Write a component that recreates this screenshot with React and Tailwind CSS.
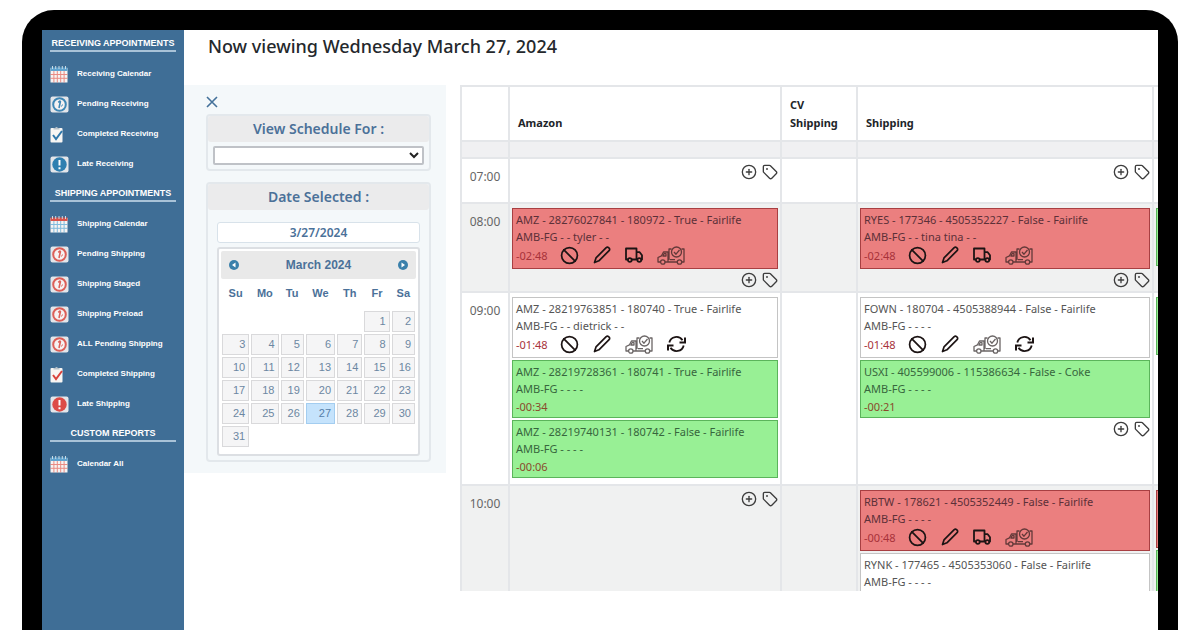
import { useState } from "react"
import { Ban, CirclePlus, Tag } from "lucide-react"
import clsx from "clsx"

const menu = [
    {
        title: "RECEIVING APPOINTMENTS",
        items: [
            { label: "Receiving Calendar", icon: "calendar", main: "#e5695f", top: "#5fa3cf" },
            { label: "Pending Receiving", icon: "clock", main: "#3f87b5" },
            { label: "Completed Receiving", icon: "clipboard", main: "#2f78ab" },
            { label: "Late Receiving", icon: "alert", main: "#2f7fb0" }
        ]
    },
    {
        title: "SHIPPING APPOINTMENTS",
        items: [
            { label: "Shipping Calendar", icon: "calendar", main: "#5aa9d6", top: "#d9534b" },
            { label: "Pending Shipping", icon: "clock", main: "#dc5f58" },
            { label: "Shipping Staged", icon: "clock", main: "#dc5f58" },
            { label: "Shipping Preload", icon: "clock", main: "#dc5f58" },
            { label: "ALL Pending Shipping", icon: "clock", main: "#dc5f58" },
            { label: "Completed Shipping", icon: "clipboard", main: "#d9433c" },
            { label: "Late Shipping", icon: "alert", main: "#dd4b46" }
        ]
    },
    {
        title: "CUSTOM REPORTS",
        items: [{ label: "Calendar All", icon: "calendar", main: "#e5695f", top: "#5fa3cf" }]
    }
]

const weekDays = ["Su", "Mo", "Tu", "We", "Th", "Fr", "Sa"]

// March 2024 starts on a Friday
const weeks = Array.from({ length: 6 }, (_, w) =>
    Array.from({ length: 7 }, (_, d) => {
        const day = w * 7 + d - 4
        return day >= 1 && day <= 31 ? day : null
    })
)

const columns = ["Amazon", "CV Shipping", "Shipping", ""]

const schedule = [
    {
        time: "07:00",
        cells: [{ actions: true }, {}, { actions: true }, {}]
    },
    {
        time: "08:00",
        shaded: true,
        cells: [
            {
                actions: true,
                cards: [{ color: "red", title: "AMZ - 28276027841 - 180972 - True - Fairlife", detail: "AMB-FG - - tyler - -", late: "-02:48", icons: ["truck", "check"] }]
            },
            {},
            {
                actions: true,
                cards: [{ color: "red", title: "RYES - 177346 - 4505352227 - False - Fairlife", detail: "AMB-FG - - tina tina - -", late: "-02:48", icons: ["truck", "check"] }]
            },
            { cards: [{ color: "green" }] }
        ]
    },
    {
        time: "09:00",
        cells: [
            {
                cards: [
                    { color: "white", title: "AMZ - 28219763851 - 180740 - True - Fairlife", detail: "AMB-FG - - dietrick - -", late: "-01:48", icons: ["check", "refresh"] },
                    { color: "green", title: "AMZ - 28219728361 - 180741 - True - Fairlife", detail: "AMB-FG - - - -", late: "-00:34" },
                    { color: "green", title: "AMZ - 28219740131 - 180742 - False - Fairlife", detail: "AMB-FG - - - -", late: "-00:06" }
                ]
            },
            {},
            {
                actions: true,
                cards: [
                    { color: "white", title: "FOWN - 180704 - 4505388944 - False - Fairlife", detail: "AMB-FG - - - -", late: "-01:48", icons: ["check", "refresh"] },
                    { color: "green", title: "USXI - 405599006 - 115386634 - False - Coke", detail: "AMB-FG - - - -", late: "-00:21" }
                ]
            },
            { cards: [{ color: "green" }] }
        ]
    },
    {
        time: "10:00",
        shaded: true,
        cells: [
            { actions: true },
            {},
            {
                cards: [
                    { color: "red", title: "RBTW - 178621 - 4505352449 - False - Fairlife", detail: "AMB-FG - - - -", late: "-00:48", icons: ["truck", "check"] },
                    { color: "white", title: "RYNK - 177465 - 4505353060 - False - Fairlife", detail: "AMB-FG - - - -" }
                ]
            },
            { cards: [{ color: "red" }, { color: "green" }] }
        ]
    }
]

const cardColors = {
    red: "bg-[#eb7f7f] border-[#a83f42] text-[#5c3038]",
    green: "bg-[#98f095] border-[#5bb45b] text-[#37663d]",
    white: "bg-white border-[#c4c4c4] text-[#555555]"
}

function MenuIcon({ icon, main, top }) {
    if (icon === "calendar") {
        return (
            <svg viewBox="0 0 18 17" className="w-[18px] h-[17px]">
                <rect x="0.5" y="2" width="17" height="14.5" fill="#f7f3f2" />
                <rect x="0.5" y="1.5" width="17" height="3.5" fill={top} />
                <path d="M2.5 0v3M5.7 0v3M9 0v3M12.3 0v3M15.5 0v3" stroke="#c9dbe6" strokeWidth="1" />
                <path d="M3.9 5v11.5M7.3 5v11.5M10.7 5v11.5M14.1 5v11.5M0.5 8.5h17M0.5 12.3h17" stroke={main} strokeWidth="1" opacity="0.75" />
            </svg>
        )
    }
    if (icon === "clipboard") {
        return (
            <svg viewBox="0 0 18 17" className="w-[18px] h-[17px]">
                <rect x="0.5" y="2" width="12" height="14.5" rx="1" fill="#f8f6f3" />
                <path d="M3.5 3.5V2h1.7a1.4 1.4 0 0 1 2.6 0h1.7v1.5z" fill="#b9c3cb" />
                <path d="M3 9l3 4 6-8" fill="none" stroke={main} strokeWidth="2" />
            </svg>
        )
    }
    return (
        <svg viewBox="0 0 19 17" className="w-[19px] h-[17px]">
            <rect x="0.5" y="0.5" width="18" height="16" rx="2" fill="#e4e6ea" />
            {icon === "clock" ? (
                <>
                    <circle cx="9.5" cy="8.5" r="6.3" fill="#f6f2f2" stroke={main} strokeWidth="2" />
                    <path d="M10.5 5L9 12M8.2 6.3l2.3-1.6" fill="none" stroke={main} strokeWidth="1.6" />
                    <path d="M11.5 10.5l1-2" fill="none" stroke={main} strokeWidth="1" />
                </>
            ) : (
                <>
                    <circle cx="9.5" cy="8.5" r="7.2" fill={main} />
                    <path d="M9.5 4v5.5M9.5 11.2v2" stroke="#fff" strokeWidth="2" />
                </>
            )}
        </svg>
    )
}

function PencilIcon() {
    return (
        <svg viewBox="0 0 18 18" className="w-[18px] h-[18px]" fill="none" stroke="currentColor" strokeWidth="1.7" strokeLinejoin="round">
            <path d="M1.5 16.5l1.5-4.6L13.2 1.7a1.6 1.6 0 0 1 2.4 0l.5.5a1.6 1.6 0 0 1 0 2.4L5.9 14.8z" />
        </svg>
    )
}

function TruckIcon() {
    return (
        <svg viewBox="0 0 18 18" className="w-[18px] h-[18px]" fill="none" stroke="currentColor" strokeWidth="1.8" strokeLinejoin="round">
            <path d="M2.7 13.5H1V2.5h10.5v11H7M11.5 6.2h3.2L17 9.2v4.3h-1M11.5 13.5H13" />
            <circle cx="4.8" cy="14" r="1.9" />
            <circle cx="14.3" cy="14" r="1.9" />
        </svg>
    )
}

function TruckCheckIcon() {
    return (
        <svg viewBox="0 0 28 19" className="w-[28px] h-[19px] opacity-65" fill="none" stroke="currentColor" strokeWidth="1.3" strokeLinejoin="round">
            <path d="M3.5 16H1v-4.5l3.5-1.7L6.5 6H11v10H8M11 16h9M14.5 3H12v11M25 16h2V3h-2.5" />
            <path d="M5.8 10H9V7.7H7z" />
            <circle cx="19.5" cy="6" r="5" />
            <path d="M17 6l2 2.2L22.500 4M13 13.7h5" />
            <circle cx="5.8" cy="16" r="2.200" />
            <circle cx="22.500" cy="16" r="2.200" />
        </svg>
    )
}

function RefreshIcon() {
    return (
        <svg viewBox="0 0 19 18" className="w-[19px] h-[18px]" fill="none" stroke="currentColor" strokeWidth="1.8">
            <path d="M2.3 7.5A7.3 7.3 0 0 1 15.500 5.200M16.700 10.500A7.3 7.3 0 0 1 3.5 12.800" />
            <path d="M18 2.500v5h-5.500M1 15.500v-5h5.500" strokeWidth="2" />
        </svg>
    )
}

const cardIcons = {
    truck: { label: "Assign truck", Icon: TruckIcon },
    check: { label: "Check in truck", Icon: TruckCheckIcon },
    refresh: { label: "Refresh", Icon: RefreshIcon }
}

function Sidebar() {
    return (
        <nav className="w-[142px] shrink-0 space-y-px bg-[#3f6e96] font-['Liberation_Sans',sans-serif] font-bold text-white">
            {menu.map((section) => (
                <section key={section.title}>
                    <div className="pt-1 pb-[7px]">
                        <h2 className="mx-2 h-[18px] border-b-2 border-[#a9c3d8] text-center text-[9px] leading-[18px] whitespace-nowrap">
                            {section.title}
                        </h2>
                    </div>
                    {section.items.map((item) => (
                        <a key={item.label} href="#" className="flex h-[30px] items-center pl-2 text-[8px] whitespace-nowrap">
                            <span className="flex w-[27px]">
                                <MenuIcon icon={item.icon} main={item.main} top={item.top} />
                            </span>
                            {item.label}
                        </a>
                    ))}
                </section>
            ))}
        </nav>
    )
}

function PanelBox({ title, children }) {
    return (
        <div className="rounded-[4px] border-2 border-[#e3e8ec] font-['Noto_Sans',sans-serif] text-[#4b7199]">
            <h3 className="h-[26px] rounded-[3px] bg-[#ebebec] text-center text-[14px] font-semibold leading-[26px]">
                {title}
            </h3>
            {children}
        </div>
    )
}

function MonthButton({ label, path }) {
    return (
        <button type="button" aria-label={label}>
            <svg viewBox="0 0 10 10" className="w-[10px] h-[10px]">
                <circle cx="5" cy="5" r="5" fill="#3a80ab" />
                <path d={path} fill="#fff" />
            </svg>
        </button>
    )
}

function DatePicker({ selected, onSelect }) {
    return (
        <div className="rounded-[3px] border-2 border-[#dcdfe3] bg-white px-[2px] pt-[2px] pb-[6px] font-['Liberation_Sans',sans-serif]">
            <div className="flex h-7 items-center justify-between rounded-[2px] bg-[#e9e9e9] px-2">
                <MonthButton label="Previous month" path="M6.5 2.5v5L3 5z" />
                <span className="text-[12px] font-bold">March 2024</span>
                <MonthButton label="Next month" path="M3.5 2.5v5L7 5z" />
            </div>
            <table className="w-full table-fixed border-separate border-spacing-0">
                <colgroup>
                    <col className="w-[15%]" />
                    <col className="w-[15%]" />
                    <col className="w-[13%]" />
                    <col className="w-[16%]" />
                    <col className="w-[14%]" />
                    <col className="w-[14%]" />
                    <col className="w-[13%]" />
                </colgroup>
                <thead>
                    <tr className="h-[31px]">
                        {weekDays.map((day) => (
                            <th key={day} className="p-0 pb-0.5 text-center text-[11px] font-bold">{day}</th>
                        ))}
                    </tr>
                </thead>
                <tbody>
                    {weeks.map((week, i) => (
                        <tr key={i} className="h-[23px]">
                            {week.map((day, j) => (
                                <td key={j} className="p-px">
                                    {day && (
                                        <button
                                            type="button"
                                            onClick={() => onSelect(day)}
                                            className={clsx(
                                                "block h-[21px] w-full border pr-[3px] text-right text-[11px] leading-[19px]",
                                                day === selected
                                                    ? "border-[#a3cdf0] bg-[#c5e3fc] text-[#5580a8]"
                                                    : "border-[#d9d9db] bg-[#f5f5f6] text-[#6c87a2]"
                                            )}
                                        >
                                            {day}
                                        </button>
                                    )}
                                </td>
                            ))}
                        </tr>
                    ))}
                </tbody>
            </table>
        </div>
    )
}

function FilterPanel({ selected, onSelect }) {
    return (
        <aside className="w-[262px] shrink-0 self-start bg-[#f4f8fa] pt-[9px] pr-[15px] pb-[11px] pl-[22px]">
            <button type="button" aria-label="Close" className="flex h-4 items-center text-[#44719a]">
                <svg viewBox="0 0 12 12" className="h-3 w-3" fill="none" stroke="currentColor" strokeWidth="1.6">
                    <path d="M1 1l10 10M11 1L1 11" />
                </svg>
            </button>
            <div className="mt-1 space-y-[11px]">
                <PanelBox title={<label htmlFor="schedule">View Schedule For :</label>}>
                    <div className="px-[5px] py-1">
                        <select id="schedule" className="block h-[19px] w-full rounded-[2px] border-2 border-[#bfc2c7] bg-white text-[11px] text-[#222222]">
                            <option></option>
                        </select>
                    </div>
                </PanelBox>
                <PanelBox title={<label htmlFor="date">Date Selected :</label>}>
                    <div className="space-y-1 px-[9px] pt-3 pb-1">
                        <input
                            id="date"
                            readOnly
                            value={`3/${selected}/2024`}
                            className="block h-[21px] w-full rounded-[3px] border border-[#d8e2ea] bg-white text-center text-[12px] font-semibold"
                        />
                        <DatePicker selected={selected} onSelect={onSelect} />
                    </div>
                </PanelBox>
            </div>
        </aside>
    )
}

function AppointmentCard({ color, title, detail, late, icons }) {
    return (
        <article className={clsx("border px-[3px] pt-0.5 text-[11px] leading-[17px] whitespace-nowrap", cardColors[color], icons ? "h-[61px]" : "h-[58px]")}>
            <p>{title}</p>
            <p>{detail}</p>
            {late && (
                <div className={clsx("flex items-center", icons ? "h-5" : "h-[18px]")}>
                    <span className={clsx("w-11 shrink-0", color === "green" ? "text-[#8a4a2c]" : "text-[#a8323a]")}>{late}</span>
                    {icons && (
                        <div className="flex items-center gap-[14px] text-[#1c1414]">
                            <button type="button" aria-label="Cancel appointment">
                                <Ban className="h-[19px] w-[19px]" strokeWidth={2.2} />
                            </button>
                            <button type="button" aria-label="Edit appointment">
                                <PencilIcon />
                            </button>
                            {icons.map((name) => {
                                const { label, Icon } = cardIcons[name]
                                return (
                                    <button key={name} type="button" aria-label={label}>
                                        <Icon />
                                    </button>
                                )
                            })}
                        </div>
                    )}
                </div>
            )}
        </article>
    )
}

function SlotActions() {
    return (
        <div className="flex h-[22px] items-center justify-end gap-[5px] text-[#3d3d3d]">
            <button type="button" aria-label="Add appointment">
                <CirclePlus className="h-4 w-4" strokeWidth={2} />
            </button>
            <button type="button" aria-label="Add tag">
                <Tag className="h-4 w-4" strokeWidth={2} />
            </button>
        </div>
    )
}

function ScheduleTable() {
    const cell = "border-r-2 border-b-2 border-[#e4e6e9]"
    return (
        <table className="w-[988px] table-fixed border-separate border-spacing-0 border-t-2 border-l-2 border-[#e4e6e9] font-['Noto_Sans',sans-serif]">
            <colgroup>
                <col className="w-[48px]" />
                <col className="w-[272px]" />
                <col className="w-[76px]" />
                <col className="w-[296px]" />
                <col className="w-[294px]" />
            </colgroup>
            <thead>
                <tr className="h-[55px]">
                    <td className={cell}></td>
                    {columns.map((name) => (
                        <th key={name} className={clsx(cell, "px-2 pb-2 text-left align-bottom text-[11px] font-bold leading-[18px] text-[#212529]")}>
                            {name}
                        </th>
                    ))}
                </tr>
            </thead>
            <tbody>
                <tr className="h-[17px] bg-[#f0f0f2]">
                    {[0, 1, 2, 3, 4].map((i) => (
                        <td key={i} className={cell}></td>
                    ))}
                </tr>
                {schedule.map((row) => (
                    <tr key={row.time} className={clsx("h-[45px]", row.shaded && "bg-[#f0f1f1]")}>
                        <th scope="row" className={clsx(cell, "p-0 pt-2 text-center align-top text-[12px] font-normal leading-5 text-[#666666]")}>
                            {row.time}
                        </th>
                        {row.cells.map(({ cards, actions }, i) => (
                            <td key={i} className={clsx(cell, "px-0.5 align-top", cards ? "pt-1" : "pt-0.5", !actions && "pb-1.5")}>
                                {cards && (
                                    <div className="space-y-[2px]">
                                        {cards.map((card, j) => (
                                            <AppointmentCard key={j} {...card} />
                                        ))}
                                    </div>
                                )}
                                {actions && <SlotActions />}
                            </td>
                        ))}
                    </tr>
                ))}
            </tbody>
        </table>
    )
}

export default function App() {
    const [selected, setSelected] = useState(27)

    return (
        <div className="flex h-screen flex-col bg-white px-[22px] pt-[10px]">
            <div className="flex min-h-0 flex-1 rounded-t-[32px] bg-black px-5 pt-5">
                <div className="flex min-w-0 flex-1 bg-white">
                    <Sidebar />
                    <main className="flex min-w-0 flex-1 flex-col">
                        <h1 className="h-[55px] shrink-0 px-6 pt-1 font-['Noto_Sans',sans-serif] text-[18px] font-medium leading-6 text-[#24282c]">
                            Now viewing Wednesday March {selected}, 2024
                        </h1>
                        <div className="flex min-h-0 flex-1 gap-[14px] pb-[39px]">
                            <FilterPanel selected={selected} onSelect={setSelected} />
                            <div className="min-w-0 flex-1 overflow-hidden">
                                <ScheduleTable />
                            </div>
                        </div>
                    </main>
                </div>
            </div>
        </div>
    )
}
